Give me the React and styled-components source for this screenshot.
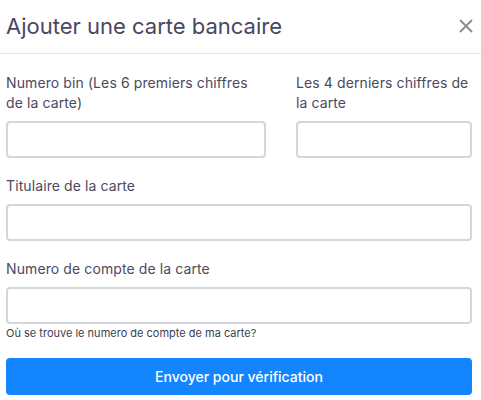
import React from "react";
import styled, { createGlobalStyle } from "styled-components";

const Global = createGlobalStyle`
  body { margin: 0; background: #fff; font-family: Inter, "Noto Sans", sans-serif; }
  * { box-sizing: border-box; }
`;

const Modal = styled.div`
  width: 481px;
  background: #fff;
`;

const Header = styled.div`
  display: flex;
  align-items: center;
  justify-content: space-between;
  height: 54px;
  padding: 0 7px 2px 6px;
  border-bottom: 1px solid #e6e6e6;
`;

const Title = styled.h2`
  margin: 0;
  font-size: 22px;
  font-weight: 400;
  color: #4b4662;
`;

const Close = styled.button`
  border: 0;
  background: none;
  padding: 0;
  width: 16px;
  height: 16px;
  display: flex;
  align-items: center;
  justify-content: center;
  cursor: pointer;
`;

const Body = styled.div`
  padding: 19px 9px 0 6px;
`;

const Row = styled.div`
  display: grid;
  grid-template-columns: 260px 176px;
  column-gap: 30px;
  align-items: end;
`;

const Group = styled.div`
  display: flex;
  flex-direction: column;
  margin-bottom: ${(p) => p.$mb ?? 18}px;
`;

const Label = styled.label`
  font-size: 14px;
  line-height: 20px;
  letter-spacing: 0.1px;
  color: #4b4a5e;
  margin-bottom: 8px;
`;

const Input = styled.input`
  height: 37px;
  border: 2px solid #d3d6dc;
  border-radius: 4px;
  padding: 0 10px;
  font: inherit;
  outline: none;
`;

const Help = styled.small`
  display: block;
  font-size: 11px;
  line-height: 14px;
  margin-top: 2px;
  color: #3e3e50;
`;

const Submit = styled.button`
  width: 100%;
  height: 37px;
  margin-top: 18px;
  border: 0;
  border-radius: 4px;
  background: #1385ff;
  color: #fff;
  font-family: Inter, "Noto Sans", sans-serif;
  font-size: 14px;
  font-weight: 500;
  cursor: pointer;
`;

export default function App() {
  return (
    <Modal>
      <Global />
      <Header>
        <Title>Ajouter une carte bancaire</Title>
        <Close aria-label="Fermer">
          <svg width="14" height="14" viewBox="0 0 14 14">
            <path d="M1 1 L13 13 M13 1 L1 13" stroke="#8a8a8a" strokeWidth="1.8" />
          </svg>
        </Close>
      </Header>
      <Body>
        <Row>
          <Group>
            <Label>Numero bin (Les 6 premiers chiffres de la carte)</Label>
            <Input />
          </Group>
          <Group>
            <Label>Les 4 derniers chiffres de la carte</Label>
            <Input />
          </Group>
        </Row>
        <Group>
          <Label>Titulaire de la carte</Label>
          <Input />
        </Group>
        <Group $mb={0}>
          <Label>Numero de compte de la carte</Label>
          <Input />
          <Help>Où se trouve le numero de compte de ma carte?</Help>
        </Group>
        <Submit>Envoyer pour vérification</Submit>
      </Body>
    </Modal>
  );
}
